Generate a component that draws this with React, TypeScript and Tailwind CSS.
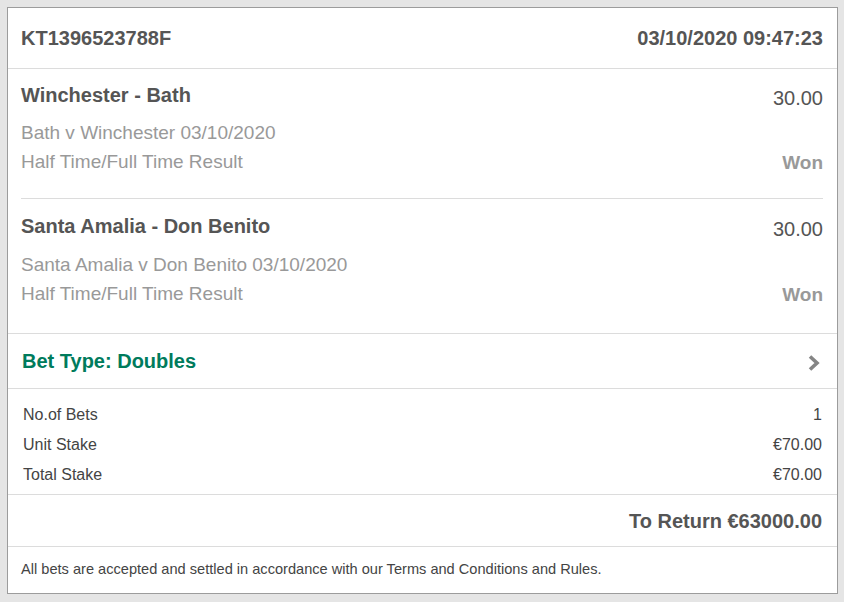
import React from 'react';

interface Selection {
  title: string;
  stake: string;
  event: string;
  market: string;
  result: string;
}

const selections: Selection[] = [
  { title: 'Winchester - Bath', stake: '30.00', event: 'Bath v Winchester 03/10/2020', market: 'Half Time/Full Time Result', result: 'Won' },
  { title: 'Santa Amalia - Don Benito', stake: '30.00', event: 'Santa Amalia v Don Benito 03/10/2020', market: 'Half Time/Full Time Result', result: 'Won' },
];

const stats = [
  { label: 'No.of Bets', value: '1' },
  { label: 'Unit Stake', value: '€70.00' },
  { label: 'Total Stake', value: '€70.00' },
];

export default function App() {
  return (
    <div className="min-h-[602px] bg-[#e5e5e5] pl-[7px] pr-[6px] pt-[7px] pb-[8px]" style={{ fontFamily: '"Liberation Sans", Arial, sans-serif' }}>
      <div className="bg-white border border-[#9c9c9c]">
        {/* header */}
        <div className="h-[61px] flex items-center justify-between pl-[13px] pr-[14px] border-b border-[#dcdcdc] text-[20px] font-bold text-[#555]">
          <span>KT1396523788F</span>
          <span>03/10/2020 09:47:23</span>
        </div>

        {/* selections */}
        <div className="pl-[13px] pr-[14px] border-b border-[#dcdcdc]">
          {selections.map((s, i) => (
            <div key={i} className={i === 0 ? 'pt-[14px] pb-[22px] border-b border-[#dcdcdc]' : 'pt-[15px] pb-[25px]'}>
              <div className="h-[24px] flex justify-between leading-[24px] text-[20px] text-[#555]">
                <span className="font-bold">{s.title}</span>
                <span className="mt-[3px]">{s.stake}</span>
              </div>
              <div className={i === 0 ? 'mt-[11px] text-[19px] leading-[29px] text-[#999]' : 'mt-[12px] text-[19px] leading-[29px] text-[#999]'}>
                <div className="h-[29px]">{s.event}</div>
                <div className="h-[29px] flex justify-between">
                  <span>{s.market}</span>
                  <span className="font-bold mt-[1px]">{s.result}</span>
                </div>
              </div>
            </div>
          ))}
        </div>

        {/* bet type */}
        <div className="h-[55px] flex items-center justify-between pl-[14px] pr-[16px] border-b border-[#dcdcdc]">
          <span className="text-[20px] font-bold text-[#007b5c]">Bet Type: Doubles</span>
          <svg width="14" height="18" viewBox="0 0 14 18" className="mt-[3px]">
            <polyline points="3,2.5 10,9 3,15.5" fill="none" stroke="#858585" strokeWidth="3.6" />
          </svg>
        </div>

        {/* stats */}
        <div className="pt-[11px] pb-[4px] px-[15px] border-b border-[#dcdcdc] text-[16px] text-[#444]">
          {stats.map(r => (
            <div key={r.label} className="h-[30px] flex items-center justify-between">
              <span>{r.label}</span>
              <span>{r.value}</span>
            </div>
          ))}
        </div>

        {/* to return */}
        <div className="h-[52px] flex items-center justify-end pr-[15px] border-b border-[#dcdcdc] text-[20px] font-bold text-[#555]">
          To Return €63000.00
        </div>

        {/* footer */}
        <div className="h-[46px] flex items-center px-[13px] text-[14.6px] text-[#444]">
          All bets are accepted and settled in accordance with our Terms and Conditions and Rules.
        </div>
      </div>
    </div>
  );
}
